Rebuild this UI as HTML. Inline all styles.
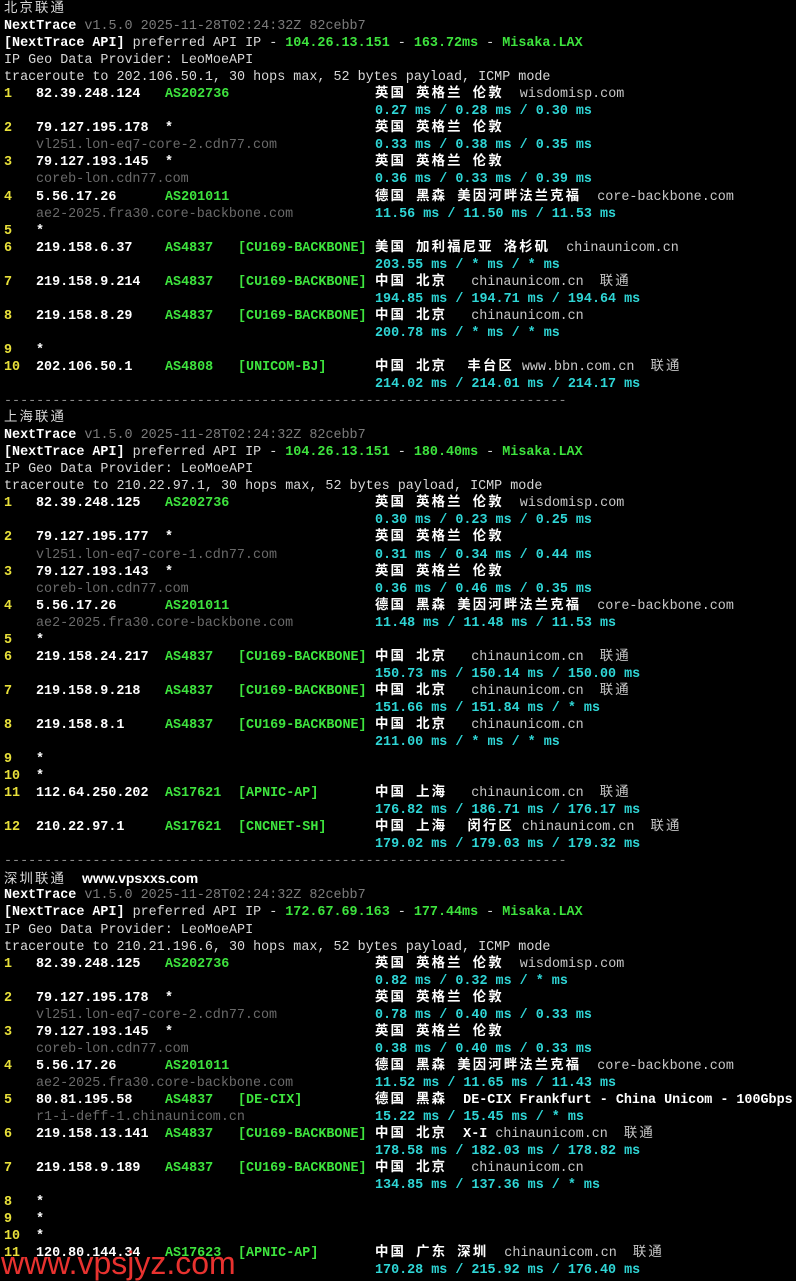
<!DOCTYPE html>
<html><head><meta charset="utf-8"><style>
html,body{margin:0;padding:0;background:#000;}
body{width:796px;height:1280px;overflow:hidden;position:relative;font-family:"Liberation Mono","Noto Sans CJK SC",monospace;font-size:13.4px;color:#d8d8d8;}
.wrap{padding-top:1px}
.l{position:relative;height:17.05px;line-height:17px;white-space:pre;}
.l>i{position:absolute;top:0;font-style:normal;}
.p{padding-left:4px}
.n{left:4px;color:#e8e03a;font-weight:bold}
.ip{left:36px;color:#fff;font-weight:bold}
.as{left:165px;color:#3ee43e;font-weight:bold}
.tg{left:238px;color:#3ee43e;font-weight:bold}
.ge{left:375px}
.st{left:165px;color:#fff;font-weight:bold}
.h{left:36px;color:#6a6a6a}
b{color:#fff;font-weight:bold}
.k{letter-spacing:2.1px}
s{text-decoration:none;color:#c8c8c8}
.c{color:#2fd6d6;font-weight:bold}
.g{color:#3ee43e;font-weight:bold}
.v{color:#7c7c7c}
.d{color:#8a8a8a}
.wm{position:absolute;left:1px;top:1245px;font-family:"Liberation Sans",sans-serif;font-size:32px;color:#e8322f;line-height:36px}
</style></head><body><div class="wrap">
<div class="l p"><span class="k">北京联通</span></div>
<div class="l p"><b>NextTrace</b> <span class="v">v1.5.0 2025-11-28T02:24:32Z 82cebb7</span></div>
<div class="l p"><b>[NextTrace API]</b> preferred API IP - <span class="g">104.26.13.151</span> - <span class="g">163.72ms</span> - <span class="g">Misaka.LAX</span></div>
<div class="l p">IP Geo Data Provider: LeoMoeAPI</div>
<div class="l p">traceroute to 202.106.50.1, 30 hops max, 52 bytes payload, ICMP mode</div>
<div class="l"><i class="n">1</i><i class="ip">82.39.248.124</i><i class="as">AS202736</i><i class="ge"><b class="k">英国 英格兰 伦敦</b>  <s>wisdomisp.com</s></i></div>
<div class="l"><i class="ge c">0.27 ms / 0.28 ms / 0.30 ms</i></div>
<div class="l"><i class="n">2</i><i class="ip">79.127.195.178</i><i class="st">*</i><i class="ge"><b class="k">英国 英格兰 伦敦</b></i></div>
<div class="l"><i class="h">vl251.lon-eq7-core-2.cdn77.com</i><i class="ge c">0.33 ms / 0.38 ms / 0.35 ms</i></div>
<div class="l"><i class="n">3</i><i class="ip">79.127.193.145</i><i class="st">*</i><i class="ge"><b class="k">英国 英格兰 伦敦</b></i></div>
<div class="l"><i class="h">coreb-lon.cdn77.com</i><i class="ge c">0.36 ms / 0.33 ms / 0.39 ms</i></div>
<div class="l"><i class="n">4</i><i class="ip">5.56.17.26</i><i class="as">AS201011</i><i class="ge"><b class="k">德国 黑森 美因河畔法兰克福</b>  <s>core-backbone.com</s></i></div>
<div class="l"><i class="h">ae2-2025.fra30.core-backbone.com</i><i class="ge c">11.56 ms / 11.50 ms / 11.53 ms</i></div>
<div class="l"><i class="n">5</i><i class="ip">*</i></div>
<div class="l"><i class="n">6</i><i class="ip">219.158.6.37</i><i class="as">AS4837</i><i class="tg">[CU169-BACKBONE]</i><i class="ge"><b class="k">美国 加利福尼亚 洛杉矶</b>  <s>chinaunicom.cn</s></i></div>
<div class="l"><i class="ge c">203.55 ms / * ms / * ms</i></div>
<div class="l"><i class="n">7</i><i class="ip">219.158.9.214</i><i class="as">AS4837</i><i class="tg">[CU169-BACKBONE]</i><i class="ge"><b class="k">中国 北京</b>   <s>chinaunicom.cn  <span class="k">联通</span></s></i></div>
<div class="l"><i class="ge c">194.85 ms / 194.71 ms / 194.64 ms</i></div>
<div class="l"><i class="n">8</i><i class="ip">219.158.8.29</i><i class="as">AS4837</i><i class="tg">[CU169-BACKBONE]</i><i class="ge"><b class="k">中国 北京</b>   <s>chinaunicom.cn</s></i></div>
<div class="l"><i class="ge c">200.78 ms / * ms / * ms</i></div>
<div class="l"><i class="n">9</i><i class="ip">*</i></div>
<div class="l"><i class="n">10</i><i class="ip">202.106.50.1</i><i class="as">AS4808</i><i class="tg">[UNICOM-BJ]</i><i class="ge"><b class="k">中国 北京  丰台区</b> <s>www.bbn.com.cn  <span class="k">联通</span></s></i></div>
<div class="l"><i class="ge c">214.02 ms / 214.01 ms / 214.17 ms</i></div>
<div class="l p d">----------------------------------------------------------------------</div>
<div class="l p"><span class="k">上海联通</span></div>
<div class="l p"><b>NextTrace</b> <span class="v">v1.5.0 2025-11-28T02:24:32Z 82cebb7</span></div>
<div class="l p"><b>[NextTrace API]</b> preferred API IP - <span class="g">104.26.13.151</span> - <span class="g">180.40ms</span> - <span class="g">Misaka.LAX</span></div>
<div class="l p">IP Geo Data Provider: LeoMoeAPI</div>
<div class="l p">traceroute to 210.22.97.1, 30 hops max, 52 bytes payload, ICMP mode</div>
<div class="l"><i class="n">1</i><i class="ip">82.39.248.125</i><i class="as">AS202736</i><i class="ge"><b class="k">英国 英格兰 伦敦</b>  <s>wisdomisp.com</s></i></div>
<div class="l"><i class="ge c">0.30 ms / 0.23 ms / 0.25 ms</i></div>
<div class="l"><i class="n">2</i><i class="ip">79.127.195.177</i><i class="st">*</i><i class="ge"><b class="k">英国 英格兰 伦敦</b></i></div>
<div class="l"><i class="h">vl251.lon-eq7-core-1.cdn77.com</i><i class="ge c">0.31 ms / 0.34 ms / 0.44 ms</i></div>
<div class="l"><i class="n">3</i><i class="ip">79.127.193.143</i><i class="st">*</i><i class="ge"><b class="k">英国 英格兰 伦敦</b></i></div>
<div class="l"><i class="h">coreb-lon.cdn77.com</i><i class="ge c">0.36 ms / 0.46 ms / 0.35 ms</i></div>
<div class="l"><i class="n">4</i><i class="ip">5.56.17.26</i><i class="as">AS201011</i><i class="ge"><b class="k">德国 黑森 美因河畔法兰克福</b>  <s>core-backbone.com</s></i></div>
<div class="l"><i class="h">ae2-2025.fra30.core-backbone.com</i><i class="ge c">11.48 ms / 11.48 ms / 11.53 ms</i></div>
<div class="l"><i class="n">5</i><i class="ip">*</i></div>
<div class="l"><i class="n">6</i><i class="ip">219.158.24.217</i><i class="as">AS4837</i><i class="tg">[CU169-BACKBONE]</i><i class="ge"><b class="k">中国 北京</b>   <s>chinaunicom.cn  <span class="k">联通</span></s></i></div>
<div class="l"><i class="ge c">150.73 ms / 150.14 ms / 150.00 ms</i></div>
<div class="l"><i class="n">7</i><i class="ip">219.158.9.218</i><i class="as">AS4837</i><i class="tg">[CU169-BACKBONE]</i><i class="ge"><b class="k">中国 北京</b>   <s>chinaunicom.cn  <span class="k">联通</span></s></i></div>
<div class="l"><i class="ge c">151.66 ms / 151.84 ms / * ms</i></div>
<div class="l"><i class="n">8</i><i class="ip">219.158.8.1</i><i class="as">AS4837</i><i class="tg">[CU169-BACKBONE]</i><i class="ge"><b class="k">中国 北京</b>   <s>chinaunicom.cn</s></i></div>
<div class="l"><i class="ge c">211.00 ms / * ms / * ms</i></div>
<div class="l"><i class="n">9</i><i class="ip">*</i></div>
<div class="l"><i class="n">10</i><i class="ip">*</i></div>
<div class="l"><i class="n">11</i><i class="ip">112.64.250.202</i><i class="as">AS17621</i><i class="tg">[APNIC-AP]</i><i class="ge"><b class="k">中国 上海</b>   <s>chinaunicom.cn  <span class="k">联通</span></s></i></div>
<div class="l"><i class="ge c">176.82 ms / 186.71 ms / 176.17 ms</i></div>
<div class="l"><i class="n">12</i><i class="ip">210.22.97.1</i><i class="as">AS17621</i><i class="tg">[CNCNET-SH]</i><i class="ge"><b class="k">中国 上海  闵行区</b> <s>chinaunicom.cn  <span class="k">联通</span></s></i></div>
<div class="l"><i class="ge c">179.02 ms / 179.03 ms / 179.32 ms</i></div>
<div class="l p d">----------------------------------------------------------------------</div>
<div class="l p"><span class="k">深圳联通</span>  <span style="font-family:'Liberation Sans',sans-serif;font-size:14px;color:#fff;font-weight:bold">www.vpsxxs.com</span></div>
<div class="l p"><b>NextTrace</b> <span class="v">v1.5.0 2025-11-28T02:24:32Z 82cebb7</span></div>
<div class="l p"><b>[NextTrace API]</b> preferred API IP - <span class="g">172.67.69.163</span> - <span class="g">177.44ms</span> - <span class="g">Misaka.LAX</span></div>
<div class="l p">IP Geo Data Provider: LeoMoeAPI</div>
<div class="l p">traceroute to 210.21.196.6, 30 hops max, 52 bytes payload, ICMP mode</div>
<div class="l"><i class="n">1</i><i class="ip">82.39.248.125</i><i class="as">AS202736</i><i class="ge"><b class="k">英国 英格兰 伦敦</b>  <s>wisdomisp.com</s></i></div>
<div class="l"><i class="ge c">0.82 ms / 0.32 ms / * ms</i></div>
<div class="l"><i class="n">2</i><i class="ip">79.127.195.178</i><i class="st">*</i><i class="ge"><b class="k">英国 英格兰 伦敦</b></i></div>
<div class="l"><i class="h">vl251.lon-eq7-core-2.cdn77.com</i><i class="ge c">0.78 ms / 0.40 ms / 0.33 ms</i></div>
<div class="l"><i class="n">3</i><i class="ip">79.127.193.145</i><i class="st">*</i><i class="ge"><b class="k">英国 英格兰 伦敦</b></i></div>
<div class="l"><i class="h">coreb-lon.cdn77.com</i><i class="ge c">0.38 ms / 0.40 ms / 0.33 ms</i></div>
<div class="l"><i class="n">4</i><i class="ip">5.56.17.26</i><i class="as">AS201011</i><i class="ge"><b class="k">德国 黑森 美因河畔法兰克福</b>  <s>core-backbone.com</s></i></div>
<div class="l"><i class="h">ae2-2025.fra30.core-backbone.com</i><i class="ge c">11.52 ms / 11.65 ms / 11.43 ms</i></div>
<div class="l"><i class="n">5</i><i class="ip">80.81.195.58</i><i class="as">AS4837</i><i class="tg">[DE-CIX]</i><i class="ge"><b><span class="k">德国 黑森</span>  DE-CIX Frankfurt - China Unicom - 100Gbps</b></i></div>
<div class="l"><i class="h">r1-i-deff-1.chinaunicom.cn</i><i class="ge c">15.22 ms / 15.45 ms / * ms</i></div>
<div class="l"><i class="n">6</i><i class="ip">219.158.13.141</i><i class="as">AS4837</i><i class="tg">[CU169-BACKBONE]</i><i class="ge"><b><span class="k">中国 北京</span>  X-I</b> <s>chinaunicom.cn  <span class="k">联通</span></s></i></div>
<div class="l"><i class="ge c">178.58 ms / 182.03 ms / 178.82 ms</i></div>
<div class="l"><i class="n">7</i><i class="ip">219.158.9.189</i><i class="as">AS4837</i><i class="tg">[CU169-BACKBONE]</i><i class="ge"><b class="k">中国 北京</b>   <s>chinaunicom.cn</s></i></div>
<div class="l"><i class="ge c">134.85 ms / 137.36 ms / * ms</i></div>
<div class="l"><i class="n">8</i><i class="ip">*</i></div>
<div class="l"><i class="n">9</i><i class="ip">*</i></div>
<div class="l"><i class="n">10</i><i class="ip">*</i></div>
<div class="l"><i class="n">11</i><i class="ip">120.80.144.34</i><i class="as">AS17623</i><i class="tg">[APNIC-AP]</i><i class="ge"><b class="k">中国 广东 深圳</b>  <s>chinaunicom.cn  <span class="k">联通</span></s></i></div>
<div class="l"><i class="ge c">170.28 ms / 215.92 ms / 176.40 ms</i></div>
</div>
<div class="wm">www.vpsjyz.com</div>
</body></html>
